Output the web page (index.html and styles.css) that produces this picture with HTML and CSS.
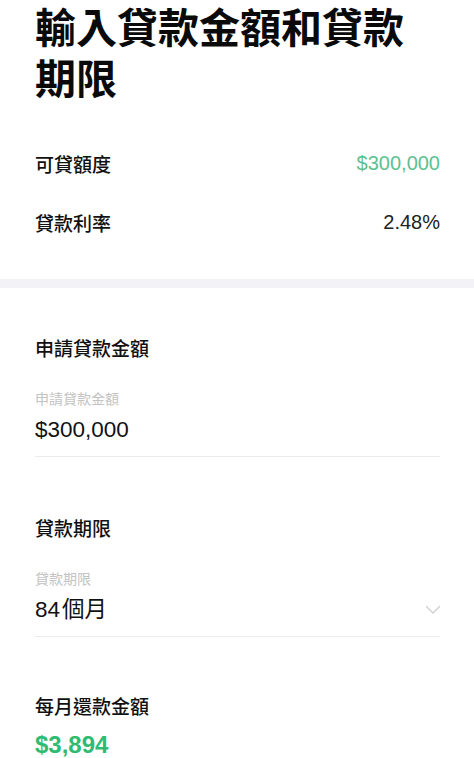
FILE: index.html
```html
<!DOCTYPE html>
<html lang="zh-Hant">
<head>
<meta charset="utf-8">
<link rel="stylesheet" href="styles.css">
</head>
<body>
<div class="page">
  <header class="intro">
    <h1 class="title">輸入貸款金額和貸款期限</h1>
    <div class="summary">
      <div class="row"><span class="row-label">可貸額度</span><span class="row-value green">$300,000</span></div>
      <div class="row"><span class="row-label">貸款利率</span><span class="row-value">2.48%</span></div>
    </div>
  </header>
  <div class="band"></div>
  <main class="form">
    <section class="field">
      <h2 class="field-title">申請貸款金額</h2>
      <div class="input">
        <div class="input-label">申請貸款金額</div>
        <div class="input-value">$300,000</div>
      </div>
    </section>
    <section class="field">
      <h2 class="field-title">貸款期限</h2>
      <div class="input">
        <div class="input-label">貸款期限</div>
        <div class="input-row">
          <div class="input-value">84<span class="unit">個月</span></div>
          <svg class="chevron" width="16" height="10" viewBox="0 0 16 10"><polyline points="1.5,1.5 8,8 14.5,1.5" fill="none" stroke="#cfcfcf" stroke-width="1.4" stroke-linecap="round" stroke-linejoin="round"/></svg>
        </div>
      </div>
    </section>
    <section class="result">
      <h2 class="field-title">每月還款金額</h2>
      <div class="result-value">$3,894</div>
    </section>
  </main>
</div>
</body>
</html>
```
FILE: styles.css
```css
* { box-sizing: border-box; margin: 0; padding: 0; }
html, body { background: #fff; }
body {
  font-family: "Liberation Sans", "Noto Sans CJK TC", sans-serif;
  color: #111;
  width: 474px;
  overflow: hidden;
}
.intro { padding: 4px 34px 27px 35px; }
.title {
  font-size: 41px;
  line-height: 51px;
  font-weight: 700;
  width: 380px;
  color: #0a0a0a;
}
.summary { margin-top: 28px; display: flex; flex-direction: column; }
.row {
  height: 59px;
  display: flex;
  align-items: center;
  justify-content: space-between;
}
.row-label { font-size: 19px; font-weight: 500; }
.row-value { font-size: 20px; color: #222; }
.green { color: #5cc190; }
.band { height: 9px; background: #f3f3f7; }
.form { padding: 50px 34px 0 35px; display: flex; flex-direction: column; }
.field { margin-bottom: 61px; }
.field-title { font-size: 19px; line-height: 24px; font-weight: 500; color: #111; }
.input {
  margin-top: 28px;
  padding-bottom: 12px;
  border-bottom: 1px solid #ececec;
}
.input-label { font-size: 14px; line-height: 18px; color: #c3c3c3; }
.input-value { margin-top: 8px; font-size: 22.5px; line-height: 28px; color: #111; }
.unit { margin-left: 2px; }
.input-row { display: flex; align-items: center; justify-content: space-between; }
.chevron { margin-top: 8px; margin-right: -1px; }
.result { margin-top: -2px; }
.result-value {
  margin-top: 10px;
  font-size: 24px;
  line-height: 30px;
  font-weight: 700;
  color: #2fbb72;
}
```
